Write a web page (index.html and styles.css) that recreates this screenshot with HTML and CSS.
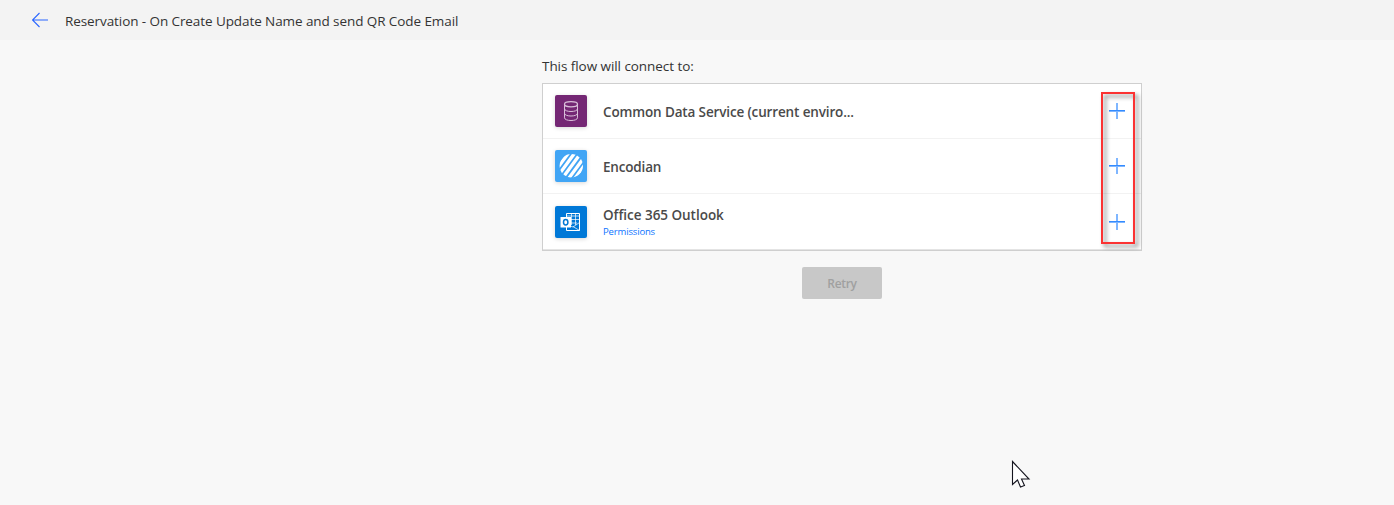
FILE: index.html
```html
<!DOCTYPE html>
<html lang="en">
<head>
<meta charset="utf-8">
<title>Flow connections</title>
<link rel="stylesheet" href="styles.css">
</head>
<body>
<header class="topbar">
  <svg class="back" width="18" height="16" viewBox="0 0 18 16" fill="none" stroke="#2b66ff" stroke-width="1.1"><path d="M0.500 8H16M7.500 1L0.500 8L7.500 15"/></svg>
  <span class="title">Reservation - On Create Update Name and send QR Code Email</span>
</header>
<main class="content">
  <div class="intro"><span>This flow will connect to:</span></div>
  <div class="list">
    <div class="row">
      <div class="icon purple"><svg width="32" height="32" viewBox="0 0 32 32" fill="none" stroke="#d9bfd9" stroke-width="1"><ellipse cx="16" cy="9.2" rx="6.5" ry="2.6" stroke-width="1.3"/><path d="M9.500 9.200V22.800C9.500 26.400 22.500 26.400 22.500 22.800V9.200M9.500 13.800C9.500 17.400 22.500 17.400 22.500 13.800M9.500 18.300C9.500 21.900 22.500 21.900 22.500 18.300"/></svg></div>
      <div class="label"><span class="name n1">Common Data Service (current enviro...</span></div>
      <svg class="plus" width="16" height="16" viewBox="0 0 16 16"><path d="M7 0h2v16h-2zM0 7h16v2h-16z"/><path class="core" d="M0 7h16v1H0z"/></svg>
    </div>
    <div class="row">
      <div class="icon sky"><svg width="32" height="32" viewBox="0 0 32 32"><defs><clipPath id="disc"><circle cx="16.300" cy="15.800" r="11.700"/></clipPath></defs><path clip-path="url(#disc)" stroke="#fff" stroke-width="3.300" d="M-7.800 32L15.700 0M-1.560 32L21.960 0M4.640 32L28.160 0M11.040 32L34.560 0M17.240 32L40.760 0"/></svg></div>
      <div class="label"><span class="name n2">Encodian</span></div>
      <svg class="plus" width="16" height="16" viewBox="0 0 16 16"><path d="M7 0h2v16h-2zM0 7h16v2h-16z"/><path class="core" d="M0 7h16v1H0z"/></svg>
    </div>
    <div class="row last">
      <div class="icon blue"><svg width="32" height="32" viewBox="0 0 32 32" fill="none" stroke="#fff"><path d="M11.500 11V7.500H24.500V24.500H11.500V21"/><path stroke-width=".7" d="M12 10H24M15.500 13.500H24.500M15.500 17H22M16.500 8V19M20.500 8V19M15.500 20L18 21L24.500 16.500M18 20.500L24.500 24.500"/><rect x="5.500" y="11" width="10.500" height="10.500" fill="#fff" stroke="none"/><ellipse cx="10.700" cy="16.200" rx="2.200" ry="2.700" stroke="#0078d4" stroke-width="1.500"/></svg></div>
      <div class="label"><span class="name n3">Office 365 Outlook</span><a class="perm">Permissions</a></div>
      <svg class="plus" width="16" height="16" viewBox="0 0 16 16"><path d="M7 0h2v16h-2zM0 7h16v2h-16z"/><path class="core" d="M0 7h16v1H0z"/></svg>
    </div>
    <div class="highlight"></div>
  </div>
  <button class="retry" disabled>Retry</button>
</main>
<svg class="cursor" width="20" height="30" viewBox="0 0 20 30"><path d="M1.500 1.500V24.500L6.500 20L9.500 27L13.500 25.500L10.500 19H18Z" fill="#fff" stroke="#15151f" stroke-width="1.100"/></svg>
</body>
</html>
```
FILE: styles.css
```css
* { box-sizing: border-box; }
body { margin: 0; height: 505px; background: #f8f8f8; color: #333; font-family: "Open Sans", "Noto Sans", sans-serif; font-size: 14px; overflow: hidden; }
.topbar { height: 40px; display: flex; align-items: center; padding-left: 32px; background: #f3f3f3; }
.back { margin-right: 15px; }
.title { font-size: 13.5px; letter-spacing: -0.085px; white-space: nowrap; margin-top: 2px; }
.content { width: 600px; margin-left: 542px; display: flex; flex-direction: column; }
.intro { height: 43px; padding-top: 17px; font-size: 13.5px; line-height: 19px; letter-spacing: -0.06px; }
.list { position: relative; height: 168px; background: #fff; border: 1px solid #cfcfcf; }
.row { height: 55px; display: flex; align-items: center; padding: 0 16px 0 12px; border-bottom: 1px solid #f2f2f2; }
.last { height: 56px; border-bottom-color: #e4e4e4; }
.icon { width: 32px; height: 32px; border-radius: 2px; box-shadow: 0 1px 4px rgba(0,0,0,.16); }
.icon svg { display: block; }
.purple { background: #742774; }
.sky { background: #41a5f5; }
.blue { background: #0078d7; }
.label { flex: 1; margin-left: 16px; display: flex; flex-direction: column; align-items: flex-start; }
.name { font-size: 13.5px; font-weight: 600; line-height: 18px; color: #4a4a4a; white-space: nowrap; margin-top: 2px; }
.n1 { letter-spacing: -0.14px; }
.n2 { letter-spacing: -0.18px; }
.n3 { letter-spacing: -0.03px; }
.perm { font-size: 9.5px; line-height: 14px; letter-spacing: -0.15px; color: #0a73ff; margin-top: 1px; }
.plus { fill: #006eff; }
.plus path { fill-opacity: .5; }
.plus .core { fill-opacity: .6; }
.highlight { position: absolute; left: 558px; top: 8px; width: 34px; height: 152px; border: 2px solid #fb3232; filter: drop-shadow(3px 3px 2px rgba(0,0,0,.5)); }
.retry { width: 80px; height: 32px; margin: 16px 0 0 260px; padding: 1px 0 0; border: 0; border-radius: 2px; background: #c8c8c8; color: #a0a0a0; font: 600 12px "Open Sans", sans-serif; letter-spacing: -0.3px; }
.cursor { position: absolute; left: 1011px; top: 460px; }
```
